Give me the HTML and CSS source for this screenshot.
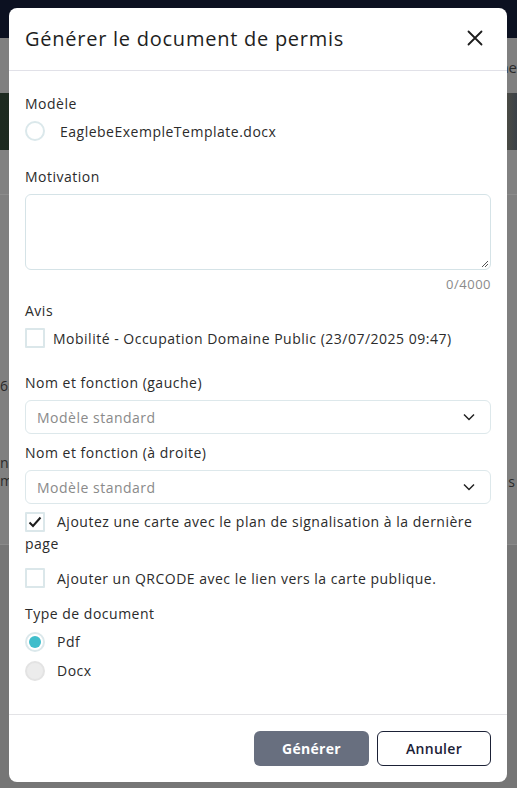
FILE: index.html
```html
<!DOCTYPE html>
<html lang="fr">
<head>
<meta charset="utf-8">
<title>Générer le document de permis</title>
<link rel="stylesheet" href="styles.css">
</head>
<body>
<div class="page">
  <div class="nav"></div>
  <div class="bg-row bg-title"></div>
  <div class="bg-row bg-image"></div>
  <div class="bg-row bg-mid"></div>
  <div class="bg-row bg-info"></div>
  <div class="bg-row bg-low"></div>
  <span class="bg-frag f0">ne</span>
  <span class="bg-frag f1">6:</span>
  <span class="bg-frag f2">n</span>
  <span class="bg-frag f3">m</span>
  <span class="bg-frag f4">s</span>
</div>

<div class="modal" role="dialog" aria-labelledby="mtitle">
  <header class="modal-header">
    <h1 id="mtitle" class="modal-title">Générer le document de permis</h1>
    <button class="close" aria-label="Fermer">
      <svg width="16" height="16" viewBox="0 0 16 16"><path d="M1.5 1.5L14.5 14.5M14.5 1.5L1.5 14.5" stroke="#1d1d1d" stroke-width="1.8" stroke-linecap="round"/></svg>
    </button>
  </header>

  <div class="modal-body">
    <div class="label l-modele">Modèle</div>
    <label class="opt opt-first">
      <span class="radio"></span>
      <span class="opt-text t-radio1">EaglebeExempleTemplate.docx</span>
    </label>

    <div class="label l-motivation">Motivation</div>
    <div class="textarea">
      <svg class="grip" width="10" height="10" viewBox="0 0 10 10"><path d="M9 3L3 9M9 6L6 9" stroke="#555" stroke-width="1"/></svg>
    </div>
    <div class="counter">0/4000</div>

    <div class="label l-avis">Avis</div>
    <label class="opt opt-avis">
      <span class="check"></span>
      <span class="opt-text t-avis">Mobilité - Occupation Domaine Public (23/07/2025 09:47)</span>
    </label>

    <div class="label l-nom1">Nom et fonction (gauche)</div>
    <div class="select">
      <span class="placeholder">Modèle standard</span>
      <svg width="12" height="8" viewBox="0 0 12 8"><path d="M1 1.5L6 6.5L11 1.5" fill="none" stroke="#222" stroke-width="1.5"/></svg>
    </div>

    <div class="label l-nom2">Nom et fonction (à droite)</div>
    <div class="select">
      <span class="placeholder">Modèle standard</span>
      <svg width="12" height="8" viewBox="0 0 12 8"><path d="M1 1.5L6 6.5L11 1.5" fill="none" stroke="#222" stroke-width="1.5"/></svg>
    </div>

    <p class="wrap-check">
      <span class="check checked"><svg width="14" height="12" viewBox="0 0 14 12"><path d="M1.5 6.5L5 10L12.5 1.5" fill="none" stroke="#1d1d1d" stroke-width="2"/></svg></span>Ajoutez une carte avec le plan de signalisation à la dernière page
    </p>

    <label class="opt opt-qr">
      <span class="check"></span>
      <span class="opt-text t-qr">Ajouter un QRCODE avec le lien vers la carte publique.</span>
    </label>

    <div class="label l-type">Type de document</div>
    <label class="opt opt-pdf">
      <span class="radio selected"><span class="dot"></span></span>
      <span class="opt-text t-pdf">Pdf</span>
    </label>
    <label class="opt opt-docx">
      <span class="radio disabled"></span>
      <span class="opt-text t-pdf">Docx</span>
    </label>
  </div>

  <footer class="modal-footer">
    <button class="btn btn-primary">Générer</button>
    <button class="btn btn-outline">Annuler</button>
  </footer>
</div>
</body>
</html>
```

FILE: styles.css
```css
* { box-sizing: border-box; }
html, body { margin: 0; padding: 0; }
body {
  width: 517px;
  height: 788px;
  overflow: hidden;
  background: #7f7f7f;
  font-family: "Open Sans", "DejaVu Sans", sans-serif;
  letter-spacing: 0.5px;
  color: #2b2b2b;
  position: relative;
}

/* dimmed background page */
.page { display: flex; flex-direction: column; height: 788px; position: relative; }
.nav { height: 38px; flex: none; background: #0c1121; }
.bg-title { height: 55px; flex: none; background: #808080; }
.bg-image { height: 57px; flex: none; background: linear-gradient(90deg, #1d2a20 0%, #223024 40%, #2d3a40 90%, #5a5540 96%, #3b4148 100%); }
.bg-mid { height: 45px; flex: none; background: #818181; border-bottom: 1px solid #8c8c8c; }
.bg-info { height: 350px; flex: none; background: #808080; border-bottom: 1px solid #8a8a8a; }
.bg-low { flex: 1; background: #767676; }
.bg-frag { position: absolute; font-size: 14px; line-height: 16px; color: #2a2a2a; letter-spacing: 0; }
.f0 { right: 0; top: 59px; font-size: 15px; }
.f1 { left: 0; top: 378px; }
.f2 { left: 0; top: 455px; }
.f3 { left: 0; top: 473px; }
.f4 { right: 2px; top: 474px; }

/* modal */
.modal {
  position: absolute;
  left: 9px;
  top: 8px;
  width: 498px;
  height: 774px;
  background: #fff;
  border-radius: 8px;
  display: flex;
  flex-direction: column;
  overflow: hidden;
}
.modal-header {
  height: 63px;
  flex: none;
  display: flex;
  align-items: center;
  justify-content: space-between;
  padding: 0 24px 1px 16px;
  border-bottom: 1px solid #e1e1e8;
}
.modal-title {
  margin: 0;
  font-size: 20px;
  font-weight: 400;
  color: #1e1e1e;
  letter-spacing: 0.75px;
}
.close {
  border: 0;
  background: none;
  padding: 0;
  width: 16px;
  height: 16px;
  display: flex;
  margin-top: -2px;
}

.modal-body {
  flex: 1;
  padding: 22px 16px 0;
  font-size: 14px;
  line-height: 21px;
}
.label { color: #2b2b2b; }
.l-modele { margin-bottom: 7px; }
.l-motivation { margin-top: 24.5px; margin-bottom: 7.5px; }
.l-avis { margin-top: 6.5px; margin-bottom: 7.5px; }
.l-nom1 { margin-top: 23.5px; margin-bottom: 7.5px; }
.l-nom2 { margin-top: 7.5px; margin-bottom: 7.5px; }
.l-type { margin-top: 14.5px; margin-bottom: 8px; }

.opt { display: flex; align-items: center; height: 20px; }
.opt-text { color: #2b2b2b; }
.t-radio1 { margin-left: 15px; }
.t-avis { margin-left: 8px; }
.t-qr { margin-left: 12px; }
.t-pdf { margin-left: 12px; }
.opt-qr { margin-top: 13px; }
.opt-docx { margin-top: 9px; }

.radio {
  width: 20px; height: 20px; flex: none;
  border-radius: 50%;
  border: 2px solid #dbe8eb;
  background: #fff;
  display: flex; align-items: center; justify-content: center;
}
.radio.disabled { background: #ececec; border-color: #e3e3e3; }
.dot { width: 12px; height: 12px; border-radius: 50%; background: #3fbdcb; }

.check {
  width: 20px; height: 20px; flex: none;
  border: 2px solid #dbe7ea;
  border-radius: 1px;
  background: #fff;
  display: inline-flex; align-items: center; justify-content: center;
}

.textarea {
  position: relative;
  height: 76px;
  border: 1px solid #d5e3e7;
  border-radius: 6px;
}
.grip { position: absolute; right: 1px; bottom: 1px; }
.counter {
  text-align: right;
  font-size: 13px;
  line-height: 18px;
  color: #8a8a8a;
  margin-top: 5px;
}

.select {
  height: 34px;
  border: 1px solid #dde8eb;
  border-radius: 6px;
  display: flex;
  align-items: center;
  justify-content: space-between;
  padding: 0 15px 0 11px;
}
.placeholder { color: #8a8a8a; }

.wrap-check {
  margin: 7px 0 0;
  line-height: 22px;
  color: #2b2b2b;
}
.wrap-check .check {
  vertical-align: top;
  margin-top: 1px;
  margin-right: 12px;
}

.modal-footer {
  flex: none;
  height: 68px;
  border-top: 1px solid #e3e3e6;
  display: flex;
  justify-content: flex-end;
  align-items: flex-start;
  gap: 8px;
  padding: 16px 16px 0;
}
.btn {
  height: 35px;
  width: 115px;
  border-radius: 6px;
  font-family: inherit;
  font-size: 14px;
  font-weight: 700;
  letter-spacing: 0.3px;
  cursor: pointer;
}
.btn-primary { background: #686f7f; color: #fff; border: 0; }
.btn-outline { background: #fff; color: #1b2136; border: 1px solid #1b2136; width: 114px; font-weight: 600; }
```
